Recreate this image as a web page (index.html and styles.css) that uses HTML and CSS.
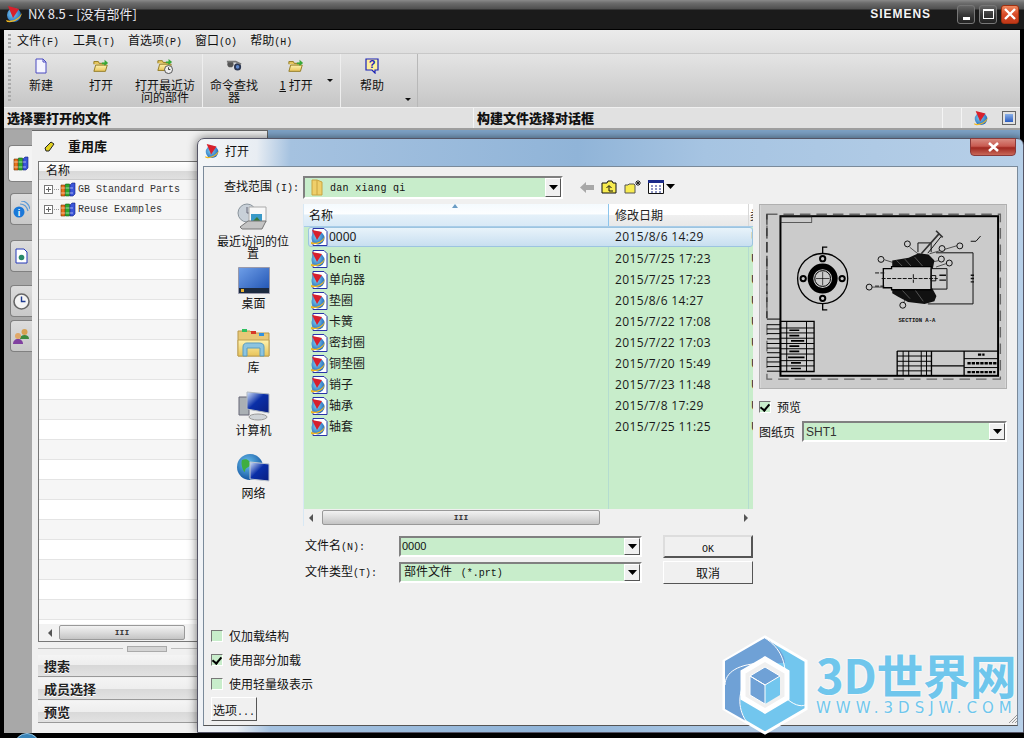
FILE: index.html
```html
<!DOCTYPE html>
<html lang="zh">
<head>
<meta charset="utf-8">
<title>NX 8.5</title>
<link rel="stylesheet" href="styles.css">
</head>
<body>
<svg class="defs" width="0" height="0">
  <defs>
    <linearGradient id="gFolder" x1="0" y1="0" x2="0" y2="1"><stop offset="0" stop-color="#fff3b0"/><stop offset="1" stop-color="#e8c45a"/></linearGradient>
    <linearGradient id="gScreen" x1="0" y1="0" x2="1" y2="1"><stop offset="0" stop-color="#6f9fe8"/><stop offset="1" stop-color="#1c4fb0"/></linearGradient>
    <linearGradient id="gBlue" x1="0" y1="0" x2="1" y2="1"><stop offset="0" stop-color="#d5e4fb"/><stop offset=".45" stop-color="#0a2fa8"/><stop offset="1" stop-color="#0a1f80"/></linearGradient>
    <radialGradient id="gSphere" cx=".4" cy=".4" r=".7"><stop offset="0" stop-color="#7fd0f2"/><stop offset="1" stop-color="#1b5fb5"/></radialGradient>
    <radialGradient id="gGlobe" cx=".4" cy=".35" r=".7"><stop offset="0" stop-color="#6cc3ef"/><stop offset="1" stop-color="#0e4f9e"/></radialGradient>
    <symbol id="nx" viewBox="0 0 18 18">
      <circle cx="9" cy="10" r="7" fill="url(#gSphere)"/>
      <path d="M1 15c5 2 12 0 16-7-1 6-8 10-15 9z" fill="#f0b820"/>
      <path d="M3 1l11 3-6 9z" fill="#d8202c"/>
    </symbol>
    <symbol id="file" viewBox="0 0 16 16">
      <path d="M3 1h7l3 3v11H3z" fill="#f4f4ff" stroke="#4a4ac0"/><path d="M10 1v3h3" fill="none" stroke="#4a4ac0"/>
    </symbol>
    <symbol id="fold" viewBox="0 0 18 16">
      <path d="M1 6V3h5l1 2h6v2" fill="#e8c860" stroke="#8c7418"/>
      <path d="M1 14l2-7h13l-2 7z" fill="url(#gFolder)" stroke="#8c7418"/>
      <path d="M10 4h3V1l4 3.500-4 3.500V6h-3z" fill="#38a838"/>
    </symbol>
    <symbol id="books" viewBox="0 0 16 15">
      <path d="M1 3h4v11H1z" fill="#e8721c" stroke="#703000" stroke-width=".6"/>
      <path d="M5.500 2h4v12h-4z" fill="#2da82d" stroke="#0e5a0e" stroke-width=".6"/>
      <path d="M10 3l2-2h3v11l-2 2h-3z" fill="#3a54d8" stroke="#101f80" stroke-width=".6"/>
      <path d="M1 6h4M5.500 6h4M10 6h3M1 11h4M5.500 11h4M10 11h3" stroke="#fff" stroke-width=".8" opacity=".7"/>
    </symbol>
    <symbol id="combo-arrow" viewBox="0 0 9 5"><path d="M0 0h9L4.500 5z"/></symbol>
  </defs>
</svg>

<div class="app">
  <header class="titlebar">
    <svg class="ic-nx"><use href="#nx"/></svg>
    <span class="app-title">NX 8.5 - [没有部件]</span>
    <span class="siemens">SIEMENS</span>
    <div class="winbtns">
      <span class="wb"><i class="wb-min"></i></span>
      <span class="wb"><i class="wb-max"></i></span>
      <span class="wb wb-close"><svg width="12" height="12" viewBox="0 0 12 12"><path d="M1 1l10 10M11 1L1 11" stroke="#fff" stroke-width="2.400"/></svg></span>
    </div>
  </header>

  <nav class="menubar">
    <i class="grip"></i>
    <span class="mi mi-1">文件<span class="m">(F)</span></span>
    <span class="mi mi-2">工具<span class="m">(T)</span></span>
    <span class="mi mi-3">首选项<span class="m">(P)</span></span>
    <span class="mi mi-4">窗口<span class="m">(O)</span></span>
    <span class="mi">帮助<span class="m">(H)</span></span>
  </nav>

  <section class="toolbar">
    <i class="grip grip-tall"></i>
    <div class="tgroup tg-1">
      <div class="tool t-60"><svg class="ti"><use href="#file"/></svg><span>新建</span></div>
      <div class="tool t-60"><svg class="ti"><use href="#fold"/></svg><span>打开</span></div>
      <div class="tool t-68">
        <svg class="ti" viewBox="0 0 18 18"><use href="#fold" width="18" height="16"/><circle cx="13" cy="13" r="4.500" fill="#eee" stroke="#444"/><path d="M13 10.500V13h2" stroke="#222" fill="none"/></svg>
        <span>打开最近访问的部件</span>
      </div>
    </div>
    <div class="tgroup tg-2">
      <div class="tool t-62">
        <svg class="ti" viewBox="0 0 18 16"><circle cx="5" cy="6" r="3.500" fill="#555"/><circle cx="13" cy="9" r="4" fill="#2a3550"/><path d="M1 3h10l6 3" stroke="#777" stroke-width="2" fill="none"/><circle cx="13" cy="9" r="2" fill="#5f86c8"/></svg>
        <span>命令查找器</span>
      </div>
      <div class="tool t-62"><svg class="ti"><use href="#fold"/></svg><span><u>1</u>&nbsp;打开</span></div>
      <i class="drop drop-top"></i>
    </div>
    <div class="tgroup tg-3">
      <div class="tool t-62">
        <svg class="ti" viewBox="0 0 16 16"><path d="M2 1h12v11h-3v3l-3-3H2z" fill="#ffef9c" stroke="#1820b8" stroke-width="1.200"/><text x="8" y="10" class="qm">?</text></svg>
        <span>帮助</span>
      </div>
      <i class="drop drop-low"></i>
    </div>
  </section>

  <section class="stripbar">
    <strong class="strip-l">选择要打开的文件</strong>
    <strong class="strip-m">构建文件选择对话框</strong>
    <i class="strip-gap"></i>
    <svg class="strip-ic"><use href="#nx"/></svg>
    <span class="strip-fit"><i></i></span>
  </section>

  <main class="workspace">
    <aside class="tabs">
      <span class="tab tab-on"><svg width="16" height="15"><use href="#books"/></svg></span>
      <span class="tab tab-2">
        <svg width="17" height="17" viewBox="0 0 17 17"><circle cx="6" cy="11" r="5.500" fill="#1a78d8"/><text x="6" y="14.500" class="info">i</text><path d="M7 3c4 0 7 3 8 7M8 0c5 0 8 4 9 8" stroke="#5b9ad8" stroke-width="1.200" fill="none"/></svg>
      </span>
      <span class="tab tab-3">
        <svg width="13" height="16" viewBox="0 0 13 16"><path d="M1 1h8l3 3v11H1z" fill="#fff" stroke="#2438b8"/><circle cx="6.500" cy="9.500" r="2.800" fill="#2a8a6a"/></svg>
      </span>
      <span class="tab tab-4">
        <svg width="17" height="17" viewBox="0 0 17 17"><circle cx="8.500" cy="8.500" r="7.500" fill="#f4f4f4" stroke="#666" stroke-width="1.600"/><path d="M8.500 3.500v5h4" stroke="#1d3a90" stroke-width="1.400" fill="none"/></svg>
      </span>
      <span class="tab tab-5">
        <svg width="17" height="17" viewBox="0 0 17 17"><circle cx="11.500" cy="4" r="3" fill="#d8a050"/><path d="M7 11c0-3 2-4 4.500-4S16 8 16 11z" fill="#3e8a3e"/><circle cx="5" cy="8" r="3" fill="#e0a868"/><path d="M0 16c0-3 2-5 5-5s5 2 5 5z" fill="#8040a0"/></svg>
      </span>
    </aside>

    <div class="panel">
      <div class="panel-head">
        <svg width="11" height="11" viewBox="0 0 11 11"><path d="M1 7l6-6 3 2-5 7H2z" fill="#e0d020" stroke="#222"/></svg>
        <strong>重用库</strong>
      </div>
      <div class="tree">
        <div class="tree-head">名称</div>
        <div class="tree-row"><i class="plus"></i><i class="dots"></i><svg width="16" height="15"><use href="#books"/></svg><span class="m tree-t">GB Standard Parts</span></div>
        <div class="tree-row"><i class="plus"></i><i class="dots"></i><svg width="16" height="15"><use href="#books"/></svg><span class="m tree-t">Reuse Examples</span></div>
        <div class="tree-fill"></div>
        <div class="hscroll hscroll-tree">
          <i class="arr-l"></i><span class="thumb thumb-tree"><span class="m">III</span></span>
        </div>
      </div>
      <div class="splitter"><i></i></div>
      <div class="sect">搜索</div>
      <div class="sect">成员选择</div>
      <div class="sect">预览</div>
    </div>
    <div class="desk"></div>
  </main>
  <div class="foot"><i class="orb"></i></div>
</div>

<div class="dialog">
  <div class="dlg-title">
    <svg class="ic-nx2"><use href="#nx"/></svg>
    <span>打开</span>
    <span class="dlg-x"><svg width="13" height="10" viewBox="0 0 13 10"><path d="M2 1l9 8M11 1L2 9" stroke="#fff" stroke-width="2.600"/></svg></span>
  </div>
  <div class="dlg-body">
    <div class="dlg-grid">
      <div class="look-label">查找范围<span class="m look-key">(I):</span></div>
      <div class="look-row">
        <div class="combo combo-look">
          <svg width="14" height="17" viewBox="0 0 14 17"><path d="M2 1h5l5 2v13H2z" fill="#efcf6a" stroke="#c9a440"/><path d="M7 1v15" stroke="#c9a440"/></svg>
          <span class="m look-val">dan xiang qi</span>
          <span class="cbtn"><svg width="9" height="5"><use href="#combo-arrow"/></svg></span>
        </div>
        <svg class="nav-back" width="14" height="11" viewBox="0 0 14 11"><path d="M0 5.500L6 0v3h8v5H6v3z" fill="#a8a8a8"/></svg>
        <svg class="nav-ic" width="16" height="14" viewBox="0 0 16 14"><path d="M1 13V3h5l1-2h4l1 2h3v10z" fill="#f8ec50" stroke="#111"/><path d="M8 11V6M5.500 8L8 5.500 10.500 8M8 11h4" stroke="#111" fill="none"/></svg>
        <svg class="nav-ic" width="17" height="14" viewBox="0 0 17 14"><path d="M1 13V5h3l1-1h5l1 1v8z" fill="#f8ec50" stroke="#555"/><path d="M14 0v6M11 3h6M12 1l4 4M16 1l-4 4" stroke="#222"/></svg>
        <svg class="nav-ic" width="16" height="14" viewBox="0 0 16 14"><path d="M.5.500h15v13H.5z" fill="#fff" stroke="#111"/><path d="M0 0h16v3H0z" fill="#1a2a8a"/><path d="M3 6h2M7 6h2M11 6h2M3 9h2M7 9h2M11 9h2M3 12h2M7 12h2M11 12h2" stroke="#1a2a8a"/></svg>
        <svg class="nav-drop" width="9" height="5"><use href="#combo-arrow"/></svg>
      </div>

      <aside class="places">
        <div class="place place-1">
          <svg width="34" height="30" viewBox="0 0 34 30"><circle cx="11" cy="10" r="9" fill="#c8d0d8" stroke="#8a949c"/><path d="M11 4v6h5" stroke="#667" fill="none"/><path d="M13 4h17v15H13z" fill="#f8f8f8" stroke="#aaa"/><path d="M15 11h11v9H15z" fill="#3a9ac8"/><path d="M15 20l6-6 5 6z" fill="#3a7a3a"/><path d="M4 24l8-6h18l-4 8H6z" fill="#c4c4c4" stroke="#777"/></svg>
          <span>最近访问的位置</span>
        </div>
        <div class="place place-2">
          <svg width="32" height="27" viewBox="0 0 32 27"><path d="M.5.500h31v26H.5z" fill="url(#gScreen)" stroke="#99a"/><path d="M1 21h30v5H1z" fill="#1c2a40"/><path d="M3 22h3v3H3z" fill="#e8b030"/></svg>
          <span>桌面</span>
        </div>
        <div class="place">
          <svg width="33" height="30" viewBox="0 0 33 30"><path d="M1 28V3h12l2 2h17v23z" fill="#e8c878" stroke="#b89848"/><path d="M5 1h5v3H5z" fill="#30c060"/><path d="M14 3h5v3h-5z" fill="#d83828"/><path d="M22 5h5v3h-5z" fill="#3090e0"/><path d="M1 12h31v16H1z" fill="url(#gFolder)" stroke="#c0a050"/><path d="M6 28v-9c0-3 2-4 4-4h12c3 0 5 1 5 4v9h-4v-8H10v8z" fill="#8cc4e0" stroke="#5a9cc0"/></svg>
          <span>库</span>
        </div>
        <div class="place">
          <svg width="32" height="30" viewBox="0 0 32 30"><path d="M1 6h10v18H1z" fill="#aab0b4" stroke="#667"/><path d="M9 1l22 2v19L9 18z" fill="url(#gBlue)" stroke="#b0b8c0"/><ellipse cx="20" cy="26" rx="9" ry="3" fill="#d0d4d8" stroke="#999"/></svg>
          <span>计算机</span>
        </div>
        <div class="place">
          <svg width="33" height="30" viewBox="0 0 33 30"><circle cx="13" cy="13" r="13" fill="url(#gGlobe)"/><path d="M5 6c4-2 8 0 8 4s-5 3-5 7-5-6-3-11zM14 20c3-2 5 0 4 4z" fill="#3fae3f"/><path d="M13 8l19 2v17l-19-2z" fill="url(#gBlue)" stroke="#c0c8d0"/></svg>
          <span>网络</span>
        </div>
      </aside>

      <div class="center">
        <div class="filelist">
          <div class="fl-head">
            <span class="fh fh-name">名称<i class="sort"></i></span>
            <span class="fh fh-date">修改日期</span>
            <span class="fh fh-type">类</span>
          </div>
          <div class="fl-rows">
            <div class="frow frow-sel"><svg class="ic-part"><use href="#part"/></svg><span class="fn">0000</span><span class="fd">2015/8/6 14:29</span><span class="ft">U</span></div>
            <div class="frow"><svg class="ic-part"><use href="#part"/></svg><span class="fn">ben ti</span><span class="fd">2015/7/25 17:23</span><span class="ft">U</span></div>
            <div class="frow"><svg class="ic-part"><use href="#part"/></svg><span class="fn">单向器</span><span class="fd">2015/7/25 17:23</span><span class="ft">U</span></div>
            <div class="frow"><svg class="ic-part"><use href="#part"/></svg><span class="fn">垫圈</span><span class="fd">2015/8/6 14:27</span><span class="ft">U</span></div>
            <div class="frow"><svg class="ic-part"><use href="#part"/></svg><span class="fn">卡簧</span><span class="fd">2015/7/22 17:08</span><span class="ft">U</span></div>
            <div class="frow"><svg class="ic-part"><use href="#part"/></svg><span class="fn">密封圈</span><span class="fd">2015/7/22 17:03</span><span class="ft">U</span></div>
            <div class="frow"><svg class="ic-part"><use href="#part"/></svg><span class="fn">铜垫圈</span><span class="fd">2015/7/20 15:49</span><span class="ft">U</span></div>
            <div class="frow"><svg class="ic-part"><use href="#part"/></svg><span class="fn">销子</span><span class="fd">2015/7/23 11:48</span><span class="ft">U</span></div>
            <div class="frow"><svg class="ic-part"><use href="#part"/></svg><span class="fn">轴承</span><span class="fd">2015/7/8 17:29</span><span class="ft">U</span></div>
            <div class="frow"><svg class="ic-part"><use href="#part"/></svg><span class="fn">轴套</span><span class="fd">2015/7/25 11:25</span><span class="ft">U</span></div>
          </div>
          <div class="hscroll hscroll-list">
            <i class="arr-l"></i><span class="thumb thumb-list"><span class="m">III</span></span><i class="arr-r"></i>
          </div>
        </div>
        <div class="form-row form-row-1">
          <label class="form-label">文件名<span class="m">(N):</span></label>
          <div class="combo combo-form"><span class="fv">0000</span><span class="cbtn"><svg width="9" height="5"><use href="#combo-arrow"/></svg></span></div>
          <button class="btn btn-def"><span class="m">OK</span></button>
        </div>
        <div class="form-row">
          <label class="form-label">文件类型<span class="m">(T):</span></label>
          <div class="combo combo-form"><span class="fv2">部件文件 <span class="m">&nbsp;(*.prt)</span></span><span class="cbtn"><svg width="9" height="5"><use href="#combo-arrow"/></svg></span></div>
          <button class="btn">取消</button>
        </div>
      </div>

      <div class="preview">
        <svg class="drawing" viewBox="12 12 744 555" width="248" height="185">
          <rect x="12" y="12" width="744" height="555" fill="#cbcbcb"/>
          <rect x="32" y="40" width="708" height="500" fill="none" stroke="#666" stroke-width="4" stroke-dasharray="32 18"/>
          <path d="M32 40v315" stroke="#111" stroke-width="3" stroke-dasharray="32 10"/>
          <rect x="73" y="46" width="660" height="484" fill="none" stroke="#000" stroke-width="6"/>
          <rect x="74" y="48" width="94" height="17" fill="none" stroke="#222" stroke-width="2"/>
          <g fill="none" stroke="#000">
            <circle cx="201" cy="235" r="76" stroke-width="4"/>
            <circle cx="201" cy="235" r="37" stroke-width="17"/>
            <circle cx="201" cy="235" r="24" stroke-width="3"/>
            <path d="M180 235h42M201 214v42" stroke-width="2"/>
            <circle cx="201" cy="175" r="8" stroke-width="6"/>
            <circle cx="201" cy="295" r="8" stroke-width="6"/>
            <circle cx="142" cy="235" r="8" stroke-width="6"/>
            <circle cx="260" cy="235" r="8" stroke-width="6"/>
            <path d="M201 158v-18h14M201 312v18h14" stroke-width="4"/>
          </g>
          <g>
            <path d="M412 180l50-8 30-14 30 4 18 18-5 25H412z" fill="#111"/>
            <path d="M412 262h120l14 26-6 16-30 8-50-6-30-16-18-10z" fill="#111"/>
            <path d="M425 180l20 20M450 176l25 28M480 170l30 34M440 268l26 28M480 268l26 36" stroke="#777" stroke-width="2"/>
            <path d="M385 205h25v-6h120v70H410v-6h-25z" fill="#cbcbcb" stroke="#000" stroke-width="4"/>
            <path d="M360 218h30M360 258h30M380 235h170M476 222v26" stroke="#111" stroke-width="3" stroke-dasharray="12 4"/>
            <path d="M530 205h48v62h-48zM530 226h14v16h-14z" fill="none" stroke="#111" stroke-width="3"/>
            <path d="M520 158l40-50M490 155V127h40v28M545 157h112v155H520" fill="none" stroke="#111" stroke-width="3"/>
            <path d="M500 160l55-62M545 90l20 20" stroke="#333" stroke-width="5"/>
            <path d="M465 140l25 20M525 160l85-25M388 178l25 8M350 261h35M445 312l10-22M555 180l-25 6M575 190l-30 10" stroke="#111" stroke-width="2"/>
            <g fill="#cbcbcb" stroke="#111" stroke-width="3">
              <circle cx="458" cy="130" r="9"/><circle cx="563" cy="144" r="9"/><circle cx="617" cy="136" r="9"/>
              <circle cx="378" cy="177" r="9"/><circle cx="561" cy="176" r="9"/><circle cx="585" cy="188" r="9"/>
              <circle cx="342" cy="261" r="9"/><circle cx="444" cy="316" r="9"/>
            </g>
            <path d="M650 122h16l14-16" stroke="#111" stroke-width="3" fill="none"/>
            <path d="M650 225h10M650 235h10M650 245h10M555 225h20M555 240h20" stroke="#111" stroke-width="4"/>
          </g>
          <text x="431" y="368" class="dw-text">SECTION A-A</text>
          <g fill="none" stroke="#000">
            <path d="M73 365h102v152H73z" stroke-width="4"/>
            <path d="M73 385h102M73 400h102M73 416h102M73 432h102M73 448h102M73 464h102M73 484h102M73 500h102M92 365v152M152 365v152" stroke-width="3"/>
            <path d="M32 358h41M32 375h41M32 388h41M32 402h41M32 418h41M32 432h41M32 446h41M32 460h41M32 474h41M32 488h41M32 502h41M32 516h41" stroke-width="3"/>
            <path d="M100 392h30M100 408h30M105 424h40M100 440h30M100 456h30M96 474h50M105 491h30M105 508h30" stroke-width="5"/>
            <path d="M427 455h306M427 455v75M531 455v75M630 455v75M531 500h100" stroke-width="4"/>
            <path d="M427 470h104M427 486h104M427 500h104M427 515h104M445 455v75M462 455v75M500 455v75M516 455v75M630 478h103M630 505h103" stroke-width="3"/>
            <path d="M672 466h20M640 492h90M640 519h85" stroke-width="7" stroke-dasharray="10 3"/>
          </g>
        </svg>
        <label class="chk-row chk-prev"><i class="chk on"></i>预览</label>
        <div class="sheet-row">
          <span class="sheet-label">图纸页</span>
          <div class="combo combo-sheet"><span class="fv3">SHT1</span><span class="cbtn"><svg width="9" height="5"><use href="#combo-arrow"/></svg></span></div>
        </div>
      </div>
    </div>

    <div class="opts">
      <label class="chk-row"><i class="chk"></i>仅加载结构</label>
      <label class="chk-row"><i class="chk on"></i>使用部分加载</label>
      <label class="chk-row"><i class="chk"></i>使用轻量级表示</label>
      <button class="btn btn-opt">选项<span class="m">...</span></button>
    </div>
  </div>
  <svg class="grip-resize" width="11" height="11" viewBox="0 0 11 11"><path d="M10 2l-8 8M10 5l-5 5M10 8l-2 2" stroke="#999"/></svg>
</div>

<svg class="defs" width="0" height="0">
  <symbol id="part" viewBox="0 0 18 18">
    <path d="M3 .500h11l3 3v14H3z" fill="#fff" stroke="#2a34a8"/>
    <circle cx="8" cy="10" r="6.500" fill="url(#gSphere)"/>
    <path d="M1 14c5 2 11 0 14-6-1 6-7 9-14 8z" fill="#f0b820"/>
    <path d="M2 2l10 2-5 8z" fill="#d8202c"/>
  </symbol>
</svg>

<div class="watermark">
  <svg class="wm-hex" width="88" height="100" viewBox="0 0 88 100">
    <path d="M44 2l41 24v48L44 98 3 74V26z" fill="#72c6ee" stroke="#fff" stroke-width="3"/>
    <path d="M44 3L4 26v48l21 12c-6-10-8-24-3-41 5-12 20-18 42-17 0-8-6-17-20-25z" fill="#6fa1d6"/>
    <path d="M44 3c16 10 21 25 20 40M4 50c0-12 12-22 42-22M25 86c-9-14-8-30 2-44M64 62c8 8 16 10 20 8" fill="none" stroke="#fff" stroke-width="1"/>
    <path d="M44 24l22 13v26L44 76 22 63V37z" fill="#f0f0f0" stroke="#fff" stroke-width="5"/>
    <path d="M44 50l15-9v19L44 69z" fill="#72c6ee"/>
    <path d="M44 50L29 41v19l15 9zM44 50l15-9-15-9-15 9z" fill="#6fa1d6" stroke="#fff"/>
  </svg>
  <div class="wm-text">
    <div class="wm-big">3D世界网</div>
    <div class="wm-url">WWW.3DSJW.COM</div>
  </div>
</div>
</body>
</html>
```

FILE: styles.css
```css
* { box-sizing: border-box; }
html, body { margin: 0; padding: 0; height: 738px; width: 1024px; overflow: hidden; }
body {
  background: #000;
  font: 12px/14px "Noto Sans CJK SC", "Liberation Sans", sans-serif;
  color: #111;
  position: relative;
}
i { display: block; font-style: normal; }
.defs { position: absolute; }
.m { font-family: "Liberation Mono", monospace; font-size: 10px; }

.app { display: flex; flex-direction: column; height: 738px; }

/* title bar */
.titlebar {
  height: 30px; flex: none; display: flex; align-items: center; padding: 0 5px 2px 5px;
  background: linear-gradient(#8a8a8a 0, #6c6c6c 3px, #4f4f4f 9px, #1b1b1b 10px, #1b1b1b 29px, #000 29px);
  color: #fff;
}
.ic-nx { width: 18px; height: 18px; flex: none; }
.app-title { margin-left: 5px; font: 13px/16px "Noto Sans CJK SC", sans-serif; color: #e8e8f0; }
.siemens { margin-left: auto; font: 700 12px "Liberation Sans", sans-serif; letter-spacing: .95px; color: #f4f4f4; }
.winbtns { display: flex; gap: 4px; margin-left: 26px; }
.wb {
  width: 18px; height: 19px; border: 1px solid #777; border-radius: 3px;
  background: linear-gradient(#666, #3a3a3a 50%, #222); display: flex; align-items: center; justify-content: center; position: relative;
}
.wb-min { width: 7px; height: 3px; background: #fff; margin-top: 9px; }
.wb-max { width: 11px; height: 10px; border: 1px solid #fff; border-top-width: 2px; }
.wb-close { background: linear-gradient(#f08a60, #d84a28 50%, #c03818); border-color: #a03010; }

.menubar, .toolbar, .stripbar { margin: 0 4px; flex: none; }

/* menu */
.menubar {
  height: 24px; display: flex; align-items: center;
  background: linear-gradient(#ebebeb, #dedede); border-bottom: 1px solid #c8c8c8; padding-left: 4px;
}
.grip { width: 3px; height: 16px; background: repeating-linear-gradient(#aaa 0 2px, transparent 2px 4px); }
.mi { white-space: nowrap; color: #111; }
.mi-1 { margin-left: 6px; margin-right: 14px; }
.mi-2 { margin-right: 13px; }
.mi-3 { margin-right: 13px; }
.mi-4 { margin-right: 13px; }

/* toolbar */
.toolbar {
  height: 54px; display: flex; padding-left: 4px;
  background: linear-gradient(#e4e4e4, #c6c6c6); border-bottom: 1px solid #f0f0f0;
}
.grip-tall { height: 44px; margin-top: 5px; }
.tgroup { display: flex; position: relative; height: 53px; }
.tg-1 { width: 192px; border-right: 1px solid #eee; }
.tg-2 { width: 138px; border-right: 1px solid #eee; }
.tg-3 { width: 77px; border-right: 1px solid #b8b8b8; }
.tool { display: flex; flex-direction: column; align-items: center; padding-top: 4px; }
.tool span { display: block; text-align: center; line-height: 12px; margin-top: 5px; }
.t-60 { width: 60px; }
.t-68 { width: 68px; }
.t-68 span { width: 62px; }
.t-62 { width: 62px; }
.tg-2 .t-62 span { width: 50px; }
.ti { width: 16px; height: 16px; }
.qm { font: 700 11px "Liberation Sans", sans-serif; fill: #1820b8; text-anchor: middle; }
.drop { position: absolute; width: 0; height: 0; border: 3px solid transparent; border-top: 3px solid #111; border-bottom: 0; }
.drop-top { right: 7px; top: 25px; }
.drop-low { right: 6px; top: 44px; }

/* strip */
.stripbar {
  height: 22px; display: flex; align-items: center; padding-left: 3px;
  background: #e1e1e1; border-bottom: 2px solid #a0a0a0; font-weight: 700; font-size: 13px;
}
.strip-l { width: 466px; }
.strip-m { border-left: 1px solid #f4f4f4; padding-left: 3px; height: 20px; line-height: 19px; width: 469px; }
.strip-gap { width: 20px; height: 20px; border-left: 1px solid #f4f4f4; border-right: 1px solid #f4f4f4; }
.strip-ic { width: 16px; height: 16px; margin-left: 11px; }
.strip-fit { width: 14px; height: 14px; margin-left: 13px; border: 1px solid #666; display: flex; padding: 2px; }
.strip-fit i { flex: 1; background: linear-gradient(#8ab0e8, #2a5cc0); }

/* workspace */
.workspace { flex: 1; display: flex; margin: 0 4px; min-height: 0; background: #a8a8a8; }
.tabs { width: 28px; flex: none; background: #a8a8a8; padding-top: 15px; display: flex; flex-direction: column; align-items: flex-end; }
.tab {
  width: 22px; height: 32px; background: linear-gradient(#dcdcdc, #c8c8c8); border: 1px solid #808080; border-right: 0;
  border-radius: 4px 0 0 4px; display: flex; align-items: center; justify-content: center;
}
.tab-on { width: 24px; height: 37px; background: #f4f4f4; }
.tab-2 { margin-top: 11px; }
.tab-3 { margin-top: 15px; }
.tab-4 { margin-top: 13px; }
.tab-5 { margin-top: 3px; }
.panel { width: 235px; flex: none; background: #f0f0f0; display: flex; flex-direction: column; padding: 0 0 9px 6px; border-top: 1px solid #666; }
.panel-head { height: 30px; display: flex; align-items: center; padding-left: 6px; gap: 13px; flex: none; }
.panel-head strong { font-size: 13px; }
.tree { flex: 1; display: flex; flex-direction: column; border: 1px solid #777; min-height: 0; background: #fff; margin-right: -1px; }
.tree-head { height: 18px; flex: none; padding-left: 7px; line-height: 16px; background: linear-gradient(#fff 0, #f4f4f4 50%, #d8d8d8 50%, #e0e0e0); border-bottom: 1px solid #ccc; }
.tree-row { height: 20px; flex: none; display: flex; align-items: center; padding-left: 5px; background: #f6f6f6; border-bottom: 1px solid #e2e2e2; position: relative; }
.plus { width: 9px; height: 9px; border: 1px solid #777; background: linear-gradient(#666, #666) center/5px 1px no-repeat, linear-gradient(#666, #666) center/1px 5px no-repeat, #fff; }
.dots { width: 5px; border-top: 1px dotted #999; margin: 0 1px; }
.tree-t { margin-left: 2px; color: #333; font-size: 10px; }
.tree-fill { flex: 1; background: repeating-linear-gradient(#fff 0 19px, #e4e4e4 19px 20px, #f6f6f6 20px 39px, #e4e4e4 39px 40px); }
.hscroll { flex: none; display: flex; align-items: center; background: #f2f2f2; }
.hscroll-tree { height: 17px; padding: 0 4px; }
.arr-l, .arr-r { width: 0; height: 0; border: 4px solid transparent; }
.arr-l { border-right: 4px solid #555; border-left: 0; margin: 0 7px 0 5px; }
.arr-r { border-left: 4px solid #555; border-right: 0; margin-left: auto; margin-right: 5px; }
.thumb { display: flex; align-items: center; justify-content: center; border: 1px solid #999; border-radius: 2px; height: 15px; background: linear-gradient(#f2f2f2, #dcdcdc 50%, #c4c4c4); color: #333; }
.thumb .m { font-size: 8px; font-weight: 700; }
.thumb-tree { width: 126px; }
.thumb-list { width: 278px; }
.splitter { height: 13px; flex: none; display: flex; align-items: center; justify-content: center; padding-right: 12px; background: linear-gradient(#bbb, #bbb) center/100% 1px no-repeat; }
.splitter i { width: 40px; height: 6px; background: #d4d4d4; border: 1px solid #aaa; box-shadow: 0 0 0 4px #f0f0f0; }
.sect {
  height: 22px; margin: 0 0 1px; flex: none; padding-left: 6px; line-height: 21px; font-weight: 700; font-size: 13px; color: #222;
  background: linear-gradient(#f4f4f4, #eee 50%, #d8d8d8 50%, #e2e2e2); border-bottom: 1px solid #999; text-shadow: 0 1px 0 #fff;
}
.desk { flex: 1; background: #7fa4c8; border-left: 1px solid #666; }
.foot { height: 5px; flex: none; background: #000; position: relative; overflow: hidden; }
.orb { position: absolute; left: 14px; top: 0; width: 26px; height: 26px; border-radius: 50%; background: #3a84b8; border: 1px solid #9ccbe8; }

/* dialog window */
.dialog {
  position: absolute; left: 197px; top: 138px; width: 827px; height: 595px;
  background: linear-gradient(92deg, #f4f6f8 0, #e8edf3 7%, #a5c2e0 11%, #90b4d8 45%, #a6c4e2 60%, #b8d0e8 100%);
  border-radius: 7px 7px 0 0; border: 1px solid #556; box-shadow: 0 0 10px rgba(0,0,0,.55);
  padding: 0 5px 6px; display: flex; flex-direction: column;
}
.dlg-title { height: 27px; flex: none; display: flex; align-items: center; padding: 0 0 3px 1px; position: relative; }
.ic-nx2 { width: 16px; height: 16px; margin-right: 5px; }
.dlg-x {
  position: absolute; right: 2px; top: -1px; width: 46px; height: 18px; border-radius: 0 0 4px 4px; border: 1px solid #8a3a3a;
  background: linear-gradient(#d88a80, #c85a50 45%, #a02820 55%, #c86858); display: flex; align-items: center; justify-content: center;
}
.dlg-body { flex: 1; min-height: 0; background: #f0f0f0; border: 1px solid #7a8a9a; border-bottom-color: #555; display: flex; flex-direction: column; }
.dlg-grid { display: grid; grid-template-columns: 99px 450px 1fr; grid-template-rows: 24px auto; padding-top: 8px; }
.look-label { padding-left: 20px; padding-top: 4px; white-space: nowrap; }
.look-key { margin-left: 3px; }
.look-row { grid-column: 2 / 4; display: flex; align-items: center; }
.combo { display: flex; align-items: center; background: #c8edcb; border: 2px solid; border-color: #808080 #fff #fff #808080; position: relative; }
.combo-look { width: 260px; height: 23px; padding-left: 5px; }
.look-val { margin-left: 6px; margin-top: 3px; font-size: 10px; letter-spacing: .03em; }
.cbtn {
  position: absolute; right: 0; top: 0; bottom: 0; width: 16px; background: #f0f0f0; border: 1px solid; border-color: #fff #555 #555 #fff;
  display: flex; align-items: center; justify-content: center;
}
.cbtn svg { fill: #000; }
.nav-back { margin-left: 17px; }
.nav-ic { margin-left: 7px; }
.nav-drop { margin-left: 2px; margin-top: -1px; }

.places { padding-top: 4px; }
.place { height: 63px; display: flex; flex-direction: column; align-items: center; line-height: 13px; text-align: center; }
.place span { display: block; margin-top: 2px; }
.place-1 span { width: 78px; line-height: 12px; }
.place-1 { margin-left: -1px; height: 64px; }
.place-2 { height: 61px; }

.center { margin-top: 5px; }
.filelist { height: 322px; display: flex; flex-direction: column; background: #c8edcb; border-left: 1px solid #d8e8f4; }
.fl-head { height: 23px; flex: none; display: flex; background: linear-gradient(#f4fafe, #fdfeff 45%, #e4f0f9 50%, #d8e9f6); border-bottom: 1px solid #a8cce8; }
.fh { display: block; height: 22px; line-height: 21px; padding-left: 5px; position: relative; }
.fh-name { width: 305px; border-right: 1px solid #8cc4ec; }
.fh-date { width: 140px; padding-left: 6px; border-right: 1px solid #d8d8d8; background: linear-gradient(#fff, #fff 50%, #f0f0f0 50%, #e8e8e8); color: #222; }
.fh-type { flex: 1; overflow: hidden; padding-left: 1px; background: linear-gradient(#fff, #fff 50%, #f0f0f0 50%, #e8e8e8); }
.sort { position: absolute; left: 148px; top: 0; width: 0; height: 0; border: 3px solid transparent; border-bottom: 4px solid #6a9cc4; border-top: 0; }
.fl-rows { flex: 1; min-height: 0; background: linear-gradient(90deg, transparent 304px, #b4dcd0 304px, #b4dcd0 305px, transparent 305px, transparent 444px, #b4dcd0 444px, #b4dcd0 445px, transparent 445px); }
.frow { height: 21px; display: flex; align-items: center; padding-left: 6px; color: #1a1a1a; font-family: "Open Sans", "Noto Sans CJK SC", sans-serif; font-size: 12px; position: relative; white-space: nowrap; overflow: hidden; }
.frow-sel { background: linear-gradient(#e8f3fa, #c8dff0); border: 1px solid #9cc4e0; border-radius: 3px; margin-left: 4px; padding-left: 1px; height: 20px; margin-bottom: 1px; }
.ic-part { width: 18px; height: 18px; flex: none; }
.fn { width: 286px; flex: none; margin-left: 1px; font-family: "Noto Sans", "Noto Sans CJK SC", sans-serif; }
.fd { width: 136px; flex: none; letter-spacing: .36px; }
.hscroll-list { height: 17px; padding: 0; background: #f0f0f0; }
.hscroll-list .arr-l { margin: 0 9px 0 5px; }
.form-row { display: flex; align-items: center; height: 26px; }
.form-row-1 { margin-top: 7px; }
.form-label { width: 96px; padding-left: 2px; white-space: nowrap; }
.combo-form { width: 243px; height: 21px; padding-left: 1px; }
.fv { font: 11px "Liberation Sans", sans-serif; }
.fv2 { padding-left: 2px; }
.btn {
  background: #f0f0f0; border: 1px solid; border-color: #fff #555 #555 #fff; font: 12px "Noto Sans CJK SC", sans-serif; color: #111; padding: 0;
}
.form-row .btn { width: 90px; height: 23px; margin-left: 21px; }
.btn-def { border: 2px solid; border-color: #ddd #555 #555 #ddd; }

.preview { margin-left: 6px; width: 248px; margin-top: 5px; }
.drawing { display: block; border: 1px solid #b0b0b0; }
.chk-row { display: flex; align-items: center; gap: 6px; height: 24px; }
.chk { width: 12px; height: 12px; border: 1px solid; border-color: #777 #fff #fff #777; background: #c8edcb; position: relative; }
.chk.on::after { content: ""; position: absolute; left: 2px; top: 0; width: 4px; height: 7px; border: solid #000; border-width: 0 2px 2px 0; transform: rotate(40deg); }
.chk-prev { margin-top: 6px; padding-left: 0; }
.sheet-row { display: flex; align-items: center; margin-top: 2px; }
.sheet-label { width: 43px; }
.combo-sheet { width: 205px; height: 21px; padding-left: 2px; }
.fv3 { font: 12px "Liberation Sans", sans-serif; color: #333; }

.opts { margin-top: auto; padding: 0 0 4px 7px; display: flex; flex-direction: column; align-items: flex-start; }
.btn-opt { width: 46px; height: 24px; margin-top: 1px; }
.grip-resize { position: absolute; right: 5px; bottom: 8px; }

/* watermark */
.watermark { position: absolute; left: 721px; top: 635px; display: flex; color: #6fc6ec; }
.wm-text { margin-left: 7px; padding-top: 14px; }
.wm-big {
  font: 700 47px/50px "Noto Sans CJK SC", sans-serif; white-space: nowrap; letter-spacing: -.4px;
  text-shadow: 0 0 2px #fff, 0 0 2px #fff;
}
.wm-url { font: 400 15px/14px "DejaVu Sans", sans-serif; letter-spacing: 5px; margin-top: 2px; white-space: nowrap; text-shadow: 0 0 2px #fff; }
.dw-text { font: 700 17px "Liberation Mono", monospace; fill: #111; }
.info { font: 700 9px "Liberation Sans", sans-serif; fill: #fff; text-anchor: middle; }
```
